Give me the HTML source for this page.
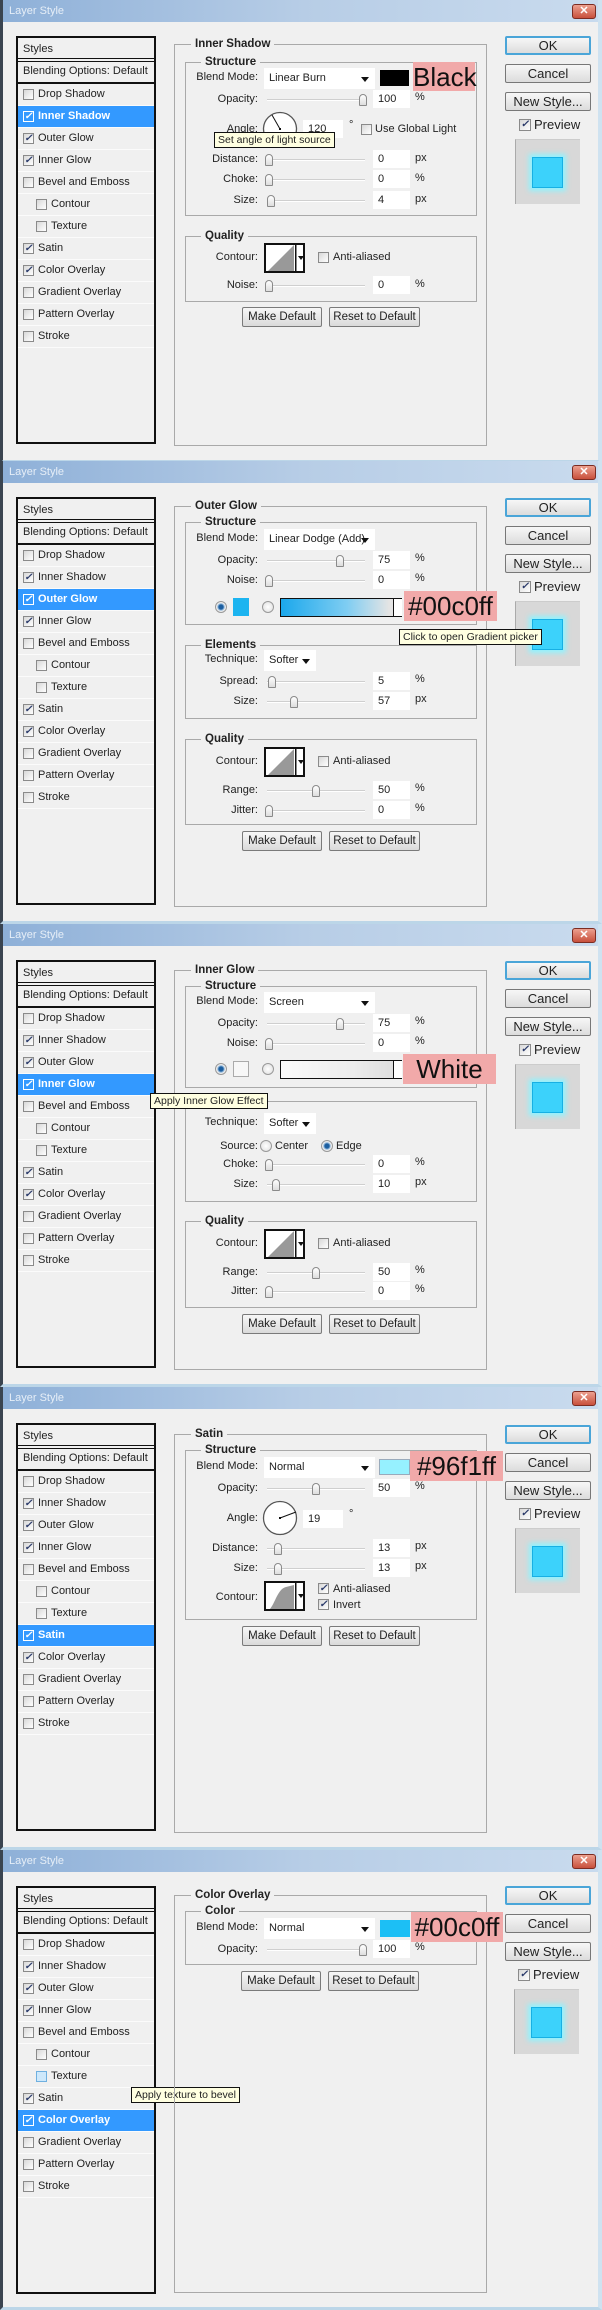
<!DOCTYPE html>
<html><head><meta charset="utf-8">
<style>
*{margin:0;padding:0;box-sizing:border-box}
body{width:602px;height:2310px;background:#c9dcec;font-family:"Liberation Sans",sans-serif;font-size:11px;color:#222;position:relative;overflow:hidden}
.p{position:absolute;left:0;width:602px;height:463px;background:#f0f0f0;border-left:3px solid #3a4450;border-right:4px solid #cfe2f0;border-bottom:3px solid #bcd6e8;overflow:hidden}
.p *{position:absolute}
.tb{left:0;top:0;width:600px;height:22px;background:linear-gradient(to right,#8eb0d8,#b7cde6 50%,#c9dbee);color:#e6eef7;line-height:22px;padding-left:6px;font-size:11px}
.x{left:569px;top:4px;width:24px;height:15px;border:1px solid #7c2c22;border-radius:3px;background:linear-gradient(#eca08f,#c8503c);color:#fff;font-size:11px;text-align:center;line-height:13px;font-weight:bold}
.lst{left:13px;top:36px;width:140px;height:408px;border:2px solid #111}
.sty{left:13px;top:36px;width:140px;height:26px;border:2px solid #111;border-bottom:4px double #111;line-height:22px;padding-left:5px}
.bo{left:13px;top:61px;width:140px;height:23px;border:2px solid #111;border-top:none;line-height:21px;padding-left:5px}
.it{left:15px;width:136px;height:22px;line-height:21px;border-bottom:1px solid #fbfbfb;padding-left:20px;white-space:nowrap}
.it.s{padding-left:33px}
.it .cb{left:5px;top:5px}
.it.s .cb{left:18px}
.cb{width:11px;height:11px;border:1px solid #8a8a8a;background:linear-gradient(135deg,#d8d8d8,#fff);font-size:10px;line-height:9px;text-align:center;color:#2a3a6a;font-weight:bold}
.sel{background:#3399ff;color:#fff;font-weight:bold}
.sel .cb{color:#fff;background:#3399ff;border-color:#fff}
.bx{border:1px solid #a9a9a9}
.lg{background:#f0f0f0;font-weight:bold;padding:0 4px;line-height:14px;font-size:11.5px}
.l{left:150px;width:105px;text-align:right;line-height:14px;white-space:nowrap}
.sl{left:264px;width:98px;height:2px;background:#cfcfcf;border-bottom:1px solid #fff}
.th{width:8px;height:12px;border:1px solid #8a8a8a;border-radius:4px 4px 1px 1px;background:linear-gradient(#fff,#ddd);margin-top:-6px}
.in{left:370px;width:37px;height:18px;background:#fff;line-height:18px;padding-left:5px}
.u{left:412px;line-height:14px}
.dd{left:261px;height:21px;background:#fff;line-height:21px;padding-left:5px;white-space:nowrap;overflow:hidden}
.dd::after{content:"";position:absolute;right:6px;top:9px;border-left:4px solid transparent;border-right:4px solid transparent;border-top:5px solid #111}
.rd{width:12px;height:12px;border-radius:50%;border:1px solid #999;background:radial-gradient(#fff,#ddd)}
.rd.on{background:radial-gradient(#1d5fa0 30%,#8fb6da 45%,#eee 60%)}
.bt{height:20px;border:1px solid #7a7a7a;border-radius:2px;background:linear-gradient(#f7f7f7,#dadada);text-align:center;line-height:18px;font-size:11.5px}
.rb{left:502px;width:86px;height:19px;border:1px solid #777;border-radius:2px;background:linear-gradient(#f7f7f7,#dcdcdc);text-align:center;line-height:17px;font-size:13px}
.ok{border:2px solid #4aa5d8;line-height:15px}
.pv{left:512px;top:139px;width:65px;height:65px;background:#d8d8d8;border-left:1px solid #aaa;border-top:1px solid #ccc}
.sq{left:529px;top:157px;width:31px;height:31px;background:#3cd2fb;border:1px solid #17b0e4;box-shadow:0 0 5px 3px #8ff3ff}
.tag{background:#f1a9a9;color:#111;font-size:26px;line-height:30px;text-align:center;font-family:"Liberation Sans",sans-serif}
.tip{background:#ffffe1;border:1px solid #111;line-height:14px;padding:0 3px;white-space:nowrap;font-size:10.5px}
.ct{background:#fff;border:2px solid #111}
</style></head><body>

<!-- PANEL 1 -->
<div class="p" style="top:0">
<div class="tb">Layer Style</div><div class="x">✕</div>
<div class="lst"></div><div class="sty">Styles</div><div class="bo">Blending Options: Default</div>
<div class="it" style="top:84px"><i class="cb"></i>Drop Shadow</div>
<div class="it sel" style="top:106px"><i class="cb">✓</i>Inner Shadow</div>
<div class="it" style="top:128px"><i class="cb">✓</i>Outer Glow</div>
<div class="it" style="top:150px"><i class="cb">✓</i>Inner Glow</div>
<div class="it" style="top:172px"><i class="cb"></i>Bevel and Emboss</div>
<div class="it s" style="top:194px"><i class="cb"></i>Contour</div>
<div class="it s" style="top:216px"><i class="cb"></i>Texture</div>
<div class="it" style="top:238px"><i class="cb">✓</i>Satin</div>
<div class="it" style="top:260px"><i class="cb">✓</i>Color Overlay</div>
<div class="it" style="top:282px"><i class="cb"></i>Gradient Overlay</div>
<div class="it" style="top:304px"><i class="cb"></i>Pattern Overlay</div>
<div class="it" style="top:326px"><i class="cb"></i>Stroke</div>

<div class="bx" style="left:171px;top:44px;width:313px;height:402px"></div>
<div class="lg" style="left:188px;top:37px">Inner Shadow</div>
<div class="bx" style="left:182px;top:62px;width:292px;height:154px"></div>
<div class="lg" style="left:198px;top:55px">Structure</div>
<div class="l" style="top:70px">Blend Mode:</div>
<div class="dd" style="top:68px;width:111px">Linear Burn</div>
<div style="left:377px;top:70px;width:29px;height:16px;background:#000"></div>
<div class="tag" style="left:410px;top:62px;width:62px;height:29px">Black</div>
<div class="l" style="top:92px">Opacity:</div><div class="sl" style="top:99px"></div><div class="th" style="left:356px;top:100px"></div><div class="in" style="top:90px">100</div><div class="u" style="top:90px">%</div>
<svg style="left:259px;top:111px" width="36" height="36"><circle cx="18" cy="18" r="16.5" fill="#fff" stroke="#555" stroke-width="1.3"/><line x1="18" y1="18" x2="10" y2="4" stroke="#111" stroke-width="1"/><rect x="17" y="17" width="2" height="2" fill="#111"/></svg>
<div class="l" style="top:122px">Angle:</div>
<div class="in" style="left:300px;top:120px;width:40px">120</div><div class="u" style="left:346px;top:118px">°</div>
<i class="cb" style="left:358px;top:124px"></i><div style="left:372px;top:122px;line-height:14px">Use Global Light</div>
<div class="tip" style="left:211px;top:132px">Set angle of light source</div>
<div class="l" style="top:152px">Distance:</div><div class="sl" style="top:159px"></div><div class="th" style="left:262px;top:160px"></div><div class="in" style="top:150px">0</div><div class="u" style="top:151px">px</div>
<div class="l" style="top:172px">Choke:</div><div class="sl" style="top:179px"></div><div class="th" style="left:262px;top:180px"></div><div class="in" style="top:170px">0</div><div class="u" style="top:171px">%</div>
<div class="l" style="top:193px">Size:</div><div class="sl" style="top:200px"></div><div class="th" style="left:264px;top:201px"></div><div class="in" style="top:191px">4</div><div class="u" style="top:192px">px</div>
<div class="bx" style="left:182px;top:236px;width:292px;height:66px"></div>
<div class="lg" style="left:198px;top:229px">Quality</div>
<div class="l" style="top:250px">Contour:</div>
<svg class="ct" style="left:261px;top:243px" width="41" height="30"><polygon points="0,28 28,0 28,28" fill="#999"/><rect x="29" y="0" width="1.5" height="28" fill="#111"/><polygon points="32,11 38,11 35,15" fill="#111"/></svg>
<i class="cb" style="left:315px;top:252px"></i><div style="left:330px;top:250px;line-height:14px">Anti-aliased</div>
<div class="l" style="top:278px">Noise:</div><div class="sl" style="top:285px"></div><div class="th" style="left:262px;top:286px"></div><div class="in" style="top:276px">0</div><div class="u" style="top:277px">%</div>
<div class="bt" style="left:239px;top:307px;width:80px">Make Default</div>
<div class="bt" style="left:326px;top:307px;width:91px">Reset to Default</div>
<div class="rb ok" style="top:36px">OK</div><div class="rb" style="top:64px">Cancel</div><div class="rb" style="top:92px">New Style...</div>
<i class="cb" style="left:516px;top:119px;width:12px;height:12px">✓</i><div style="left:531px;top:117px;font-size:13px;line-height:16px">Preview</div>
<div class="pv"></div><div class="sq"></div>
</div>

<!-- PANEL 2 -->
<div class="p" style="top:461px">
<div class="tb">Layer Style</div><div class="x">✕</div>
<div class="lst"></div><div class="sty">Styles</div><div class="bo">Blending Options: Default</div>
<div class="it" style="top:84px"><i class="cb"></i>Drop Shadow</div>
<div class="it" style="top:106px"><i class="cb">✓</i>Inner Shadow</div>
<div class="it sel" style="top:128px"><i class="cb">✓</i>Outer Glow</div>
<div class="it" style="top:150px"><i class="cb">✓</i>Inner Glow</div>
<div class="it" style="top:172px"><i class="cb"></i>Bevel and Emboss</div>
<div class="it s" style="top:194px"><i class="cb"></i>Contour</div>
<div class="it s" style="top:216px"><i class="cb"></i>Texture</div>
<div class="it" style="top:238px"><i class="cb">✓</i>Satin</div>
<div class="it" style="top:260px"><i class="cb">✓</i>Color Overlay</div>
<div class="it" style="top:282px"><i class="cb"></i>Gradient Overlay</div>
<div class="it" style="top:304px"><i class="cb"></i>Pattern Overlay</div>
<div class="it" style="top:326px"><i class="cb"></i>Stroke</div>

<div class="bx" style="left:171px;top:45px;width:313px;height:401px"></div>
<div class="lg" style="left:188px;top:38px">Outer Glow</div>
<div class="bx" style="left:182px;top:61px;width:292px;height:103px"></div>
<div class="lg" style="left:198px;top:54px">Structure</div>
<div class="l" style="top:70px">Blend Mode:</div>
<div class="dd" style="top:68px;width:111px">Linear Dodge (Add)</div>
<div class="l" style="top:92px">Opacity:</div><div class="sl" style="top:99px"></div><div class="th" style="left:333px;top:100px"></div><div class="in" style="top:90px">75</div><div class="u" style="top:90px">%</div>
<div class="l" style="top:112px">Noise:</div><div class="sl" style="top:119px"></div><div class="th" style="left:262px;top:120px"></div><div class="in" style="top:110px">0</div><div class="u" style="top:110px">%</div>
<div class="rd on" style="left:212px;top:140px"></div>
<div style="left:230px;top:137px;width:16px;height:18px;background:#1cb4f0"></div>
<div class="rd" style="left:259px;top:140px"></div>
<div style="left:277px;top:137px;width:122px;height:19px;border:1px solid #111;background:linear-gradient(to right,#1ba8ec,#7fcdf2 55%,#e4e4e4 90%)"></div>
<div style="left:390px;top:138px;width:9px;height:17px;background:#fff;border-left:1px solid #111"></div>
<div class="tag" style="left:401px;top:130px;width:93px;height:30px">#00c0ff</div>
<div class="bx" style="left:182px;top:184px;width:292px;height:74px"></div>
<div class="lg" style="left:198px;top:177px">Elements</div>
<div class="l" style="top:191px">Technique:</div>
<div class="dd" style="top:189px;width:52px">Softer</div>
<div class="l" style="top:213px">Spread:</div><div class="sl" style="top:220px"></div><div class="th" style="left:265px;top:221px"></div><div class="in" style="top:211px">5</div><div class="u" style="top:211px">%</div>
<div class="l" style="top:233px">Size:</div><div class="sl" style="top:240px"></div><div class="th" style="left:287px;top:241px"></div><div class="in" style="top:231px">57</div><div class="u" style="top:231px">px</div>
<div class="bx" style="left:182px;top:278px;width:292px;height:86px"></div>
<div class="lg" style="left:198px;top:271px">Quality</div>
<div class="l" style="top:293px">Contour:</div>
<svg class="ct" style="left:261px;top:286px" width="41" height="30"><polygon points="0,28 28,0 28,28" fill="#999"/><rect x="29" y="0" width="1.5" height="28" fill="#111"/><polygon points="32,11 38,11 35,15" fill="#111"/></svg>
<i class="cb" style="left:315px;top:295px"></i><div style="left:330px;top:293px;line-height:14px">Anti-aliased</div>
<div class="l" style="top:322px">Range:</div><div class="sl" style="top:329px"></div><div class="th" style="left:309px;top:330px"></div><div class="in" style="top:320px">50</div><div class="u" style="top:320px">%</div>
<div class="l" style="top:342px">Jitter:</div><div class="sl" style="top:349px"></div><div class="th" style="left:262px;top:350px"></div><div class="in" style="top:340px">0</div><div class="u" style="top:340px">%</div>
<div class="bt" style="left:239px;top:370px;width:80px">Make Default</div>
<div class="bt" style="left:326px;top:370px;width:91px">Reset to Default</div>
<div class="rb ok" style="top:37px">OK</div><div class="rb" style="top:65px">Cancel</div><div class="rb" style="top:93px">New Style...</div>
<i class="cb" style="left:516px;top:120px;width:12px;height:12px">✓</i><div style="left:531px;top:118px;font-size:13px;line-height:16px">Preview</div>
<div class="pv" style="top:140px"></div><div class="sq" style="top:158px"></div>
<div class="tip" style="left:396px;top:168px">Click to open Gradient picker</div>
</div>

<!-- PANEL 3 -->
<div class="p" style="top:924px">
<div class="tb">Layer Style</div><div class="x">✕</div>
<div class="lst"></div><div class="sty">Styles</div><div class="bo">Blending Options: Default</div>
<div class="it" style="top:84px"><i class="cb"></i>Drop Shadow</div>
<div class="it" style="top:106px"><i class="cb">✓</i>Inner Shadow</div>
<div class="it" style="top:128px"><i class="cb">✓</i>Outer Glow</div>
<div class="it sel" style="top:150px"><i class="cb">✓</i>Inner Glow</div>
<div class="it" style="top:172px"><i class="cb"></i>Bevel and Emboss</div>
<div class="it s" style="top:194px"><i class="cb"></i>Contour</div>
<div class="it s" style="top:216px"><i class="cb"></i>Texture</div>
<div class="it" style="top:238px"><i class="cb">✓</i>Satin</div>
<div class="it" style="top:260px"><i class="cb">✓</i>Color Overlay</div>
<div class="it" style="top:282px"><i class="cb"></i>Gradient Overlay</div>
<div class="it" style="top:304px"><i class="cb"></i>Pattern Overlay</div>
<div class="it" style="top:326px"><i class="cb"></i>Stroke</div>

<div class="bx" style="left:171px;top:46px;width:313px;height:400px"></div>
<div class="lg" style="left:188px;top:39px">Inner Glow</div>
<div class="bx" style="left:182px;top:62px;width:292px;height:102px"></div>
<div class="lg" style="left:198px;top:55px">Structure</div>
<div class="l" style="top:70px">Blend Mode:</div>
<div class="dd" style="top:68px;width:111px">Screen</div>
<div class="l" style="top:92px">Opacity:</div><div class="sl" style="top:99px"></div><div class="th" style="left:333px;top:100px"></div><div class="in" style="top:90px">75</div><div class="u" style="top:90px">%</div>
<div class="l" style="top:112px">Noise:</div><div class="sl" style="top:119px"></div><div class="th" style="left:262px;top:120px"></div><div class="in" style="top:110px">0</div><div class="u" style="top:110px">%</div>
<div class="rd on" style="left:212px;top:139px"></div>
<div style="left:230px;top:137px;width:16px;height:16px;background:#f7f7f7;border:1px solid #aaa"></div>
<div class="rd" style="left:259px;top:139px"></div>
<div style="left:277px;top:136px;width:122px;height:19px;border:1px solid #111;background:linear-gradient(to right,#fbfbfb,#ececec 60%,#dcdcdc)"></div>
<div style="left:390px;top:137px;width:9px;height:17px;background:#fff;border-left:1px solid #111"></div>
<div class="tag" style="left:400px;top:130px;width:93px;height:30px">White</div>
<div class="bx" style="left:182px;top:177px;width:292px;height:101px"></div>
<div class="lg" style="left:198px;top:170px">Elements</div>
<div class="tip" style="left:147px;top:169px">Apply Inner Glow Effect</div>
<div class="l" style="top:191px">Technique:</div>
<div class="dd" style="top:189px;width:52px">Softer</div>
<div class="l" style="top:215px">Source:</div>
<div class="rd" style="left:257px;top:216px"></div><div style="left:272px;top:215px;line-height:14px">Center</div>
<div class="rd on" style="left:318px;top:216px"></div><div style="left:333px;top:215px;line-height:14px">Edge</div>
<div class="l" style="top:233px">Choke:</div><div class="sl" style="top:240px"></div><div class="th" style="left:262px;top:241px"></div><div class="in" style="top:231px">0</div><div class="u" style="top:231px">%</div>
<div class="l" style="top:253px">Size:</div><div class="sl" style="top:260px"></div><div class="th" style="left:269px;top:261px"></div><div class="in" style="top:251px">10</div><div class="u" style="top:251px">px</div>
<div class="bx" style="left:182px;top:297px;width:292px;height:87px"></div>
<div class="lg" style="left:198px;top:290px">Quality</div>
<div class="l" style="top:312px">Contour:</div>
<svg class="ct" style="left:261px;top:305px" width="41" height="30"><polygon points="0,28 28,0 28,28" fill="#999"/><rect x="29" y="0" width="1.5" height="28" fill="#111"/><polygon points="32,11 38,11 35,15" fill="#111"/></svg>
<i class="cb" style="left:315px;top:314px"></i><div style="left:330px;top:312px;line-height:14px">Anti-aliased</div>
<div class="l" style="top:341px">Range:</div><div class="sl" style="top:348px"></div><div class="th" style="left:309px;top:349px"></div><div class="in" style="top:339px">50</div><div class="u" style="top:339px">%</div>
<div class="l" style="top:360px">Jitter:</div><div class="sl" style="top:367px"></div><div class="th" style="left:262px;top:368px"></div><div class="in" style="top:358px">0</div><div class="u" style="top:358px">%</div>
<div class="bt" style="left:239px;top:390px;width:80px">Make Default</div>
<div class="bt" style="left:326px;top:390px;width:91px">Reset to Default</div>
<div class="rb ok" style="top:37px">OK</div><div class="rb" style="top:65px">Cancel</div><div class="rb" style="top:93px">New Style...</div>
<i class="cb" style="left:516px;top:120px;width:12px;height:12px">✓</i><div style="left:531px;top:118px;font-size:13px;line-height:16px">Preview</div>
<div class="pv" style="top:140px"></div><div class="sq" style="top:158px"></div>
</div>

<!-- PANEL 4 -->
<div class="p" style="top:1387px">
<div class="tb">Layer Style</div><div class="x">✕</div>
<div class="lst"></div><div class="sty">Styles</div><div class="bo">Blending Options: Default</div>
<div class="it" style="top:84px"><i class="cb"></i>Drop Shadow</div>
<div class="it" style="top:106px"><i class="cb">✓</i>Inner Shadow</div>
<div class="it" style="top:128px"><i class="cb">✓</i>Outer Glow</div>
<div class="it" style="top:150px"><i class="cb">✓</i>Inner Glow</div>
<div class="it" style="top:172px"><i class="cb"></i>Bevel and Emboss</div>
<div class="it s" style="top:194px"><i class="cb"></i>Contour</div>
<div class="it s" style="top:216px"><i class="cb"></i>Texture</div>
<div class="it sel" style="top:238px"><i class="cb">✓</i>Satin</div>
<div class="it" style="top:260px"><i class="cb">✓</i>Color Overlay</div>
<div class="it" style="top:282px"><i class="cb"></i>Gradient Overlay</div>
<div class="it" style="top:304px"><i class="cb"></i>Pattern Overlay</div>
<div class="it" style="top:326px"><i class="cb"></i>Stroke</div>

<div class="bx" style="left:171px;top:47px;width:313px;height:399px"></div>
<div class="lg" style="left:188px;top:40px">Satin</div>
<div class="bx" style="left:182px;top:63px;width:292px;height:170px"></div>
<div class="lg" style="left:198px;top:56px">Structure</div>
<div class="l" style="top:72px">Blend Mode:</div>
<div class="dd" style="top:70px;width:111px">Normal</div>
<div style="left:376px;top:72px;width:31px;height:16px;background:#96f1ff;border:1px solid #9ab"></div>
<div class="tag" style="left:407px;top:64px;width:93px;height:30px">#96f1ff</div>
<div class="l" style="top:94px">Opacity:</div><div class="sl" style="top:101px"></div><div class="th" style="left:309px;top:102px"></div><div class="in" style="top:92px">50</div><div class="u" style="top:92px">%</div>
<svg style="left:259px;top:113px" width="36" height="36"><circle cx="18" cy="18" r="16.5" fill="#fff" stroke="#555" stroke-width="1.3"/><line x1="18" y1="18" x2="34" y2="12" stroke="#111" stroke-width="1"/><rect x="17" y="17" width="2" height="2" fill="#111"/></svg>
<div class="l" style="top:124px">Angle:</div>
<div class="in" style="left:300px;top:123px;width:40px">19</div><div class="u" style="left:346px;top:120px">°</div>
<div class="l" style="top:154px">Distance:</div><div class="sl" style="top:161px"></div><div class="th" style="left:271px;top:162px"></div><div class="in" style="top:152px">13</div><div class="u" style="top:152px">px</div>
<div class="l" style="top:174px">Size:</div><div class="sl" style="top:181px"></div><div class="th" style="left:271px;top:182px"></div><div class="in" style="top:172px">13</div><div class="u" style="top:172px">px</div>
<div class="l" style="top:203px">Contour:</div>
<svg class="ct" style="left:261px;top:194px" width="41" height="30"><path d="M0,28 C8,28 10,6 20,4 L28,2 L28,28 Z" fill="#999"/><rect x="29" y="0" width="1.5" height="28" fill="#111"/><polygon points="32,11 38,11 35,15" fill="#111"/></svg>
<i class="cb" style="left:315px;top:196px">✓</i><div style="left:330px;top:195px;line-height:14px">Anti-aliased</div>
<i class="cb" style="left:315px;top:212px">✓</i><div style="left:330px;top:211px;line-height:14px">Invert</div>
<div class="bt" style="left:239px;top:239px;width:80px">Make Default</div>
<div class="bt" style="left:326px;top:239px;width:91px">Reset to Default</div>
<div class="rb ok" style="top:38px">OK</div><div class="rb" style="top:66px">Cancel</div><div class="rb" style="top:94px">New Style...</div>
<i class="cb" style="left:516px;top:121px;width:12px;height:12px">✓</i><div style="left:531px;top:119px;font-size:13px;line-height:16px">Preview</div>
<div class="pv" style="top:141px"></div><div class="sq" style="top:159px"></div>
</div>

<!-- PANEL 5 -->
<div class="p" style="top:1850px;height:460px">
<div class="tb">Layer Style</div><div class="x">✕</div>
<div class="lst"></div><div class="sty">Styles</div><div class="bo">Blending Options: Default</div>
<div class="it" style="top:84px"><i class="cb"></i>Drop Shadow</div>
<div class="it" style="top:106px"><i class="cb">✓</i>Inner Shadow</div>
<div class="it" style="top:128px"><i class="cb">✓</i>Outer Glow</div>
<div class="it" style="top:150px"><i class="cb">✓</i>Inner Glow</div>
<div class="it" style="top:172px"><i class="cb"></i>Bevel and Emboss</div>
<div class="it s" style="top:194px"><i class="cb"></i>Contour</div>
<div class="it s" style="top:216px"><i class="cb" style="background:#cde8fb;border-color:#6fb0e0"></i>Texture</div>
<div class="it" style="top:238px"><i class="cb">✓</i>Satin</div>
<div class="it sel" style="top:260px"><i class="cb">✓</i>Color Overlay</div>
<div class="it" style="top:282px"><i class="cb"></i>Gradient Overlay</div>
<div class="it" style="top:304px"><i class="cb"></i>Pattern Overlay</div>
<div class="it" style="top:326px"><i class="cb"></i>Stroke</div>
<div class="tip" style="left:128px;top:237px">Apply texture to bevel</div>

<div class="bx" style="left:171px;top:45px;width:313px;height:398px"></div>
<div class="lg" style="left:188px;top:38px">Color Overlay</div>
<div class="bx" style="left:182px;top:61px;width:292px;height:54px"></div>
<div class="lg" style="left:198px;top:54px">Color</div>
<div class="l" style="top:70px">Blend Mode:</div>
<div class="dd" style="top:68px;width:111px">Normal</div>
<div style="left:377px;top:70px;width:30px;height:17px;background:#1cbff5"></div>
<div class="tag" style="left:408px;top:62px;width:92px;height:30px">#00c0ff</div>
<div class="l" style="top:92px">Opacity:</div><div class="sl" style="top:99px"></div><div class="th" style="left:356px;top:100px"></div><div class="in" style="top:90px">100</div><div class="u" style="top:90px">%</div>
<div class="bt" style="left:238px;top:121px;width:80px">Make Default</div>
<div class="bt" style="left:325px;top:121px;width:91px">Reset to Default</div>
<div class="rb ok" style="top:36px">OK</div><div class="rb" style="top:64px">Cancel</div><div class="rb" style="top:92px">New Style...</div>
<i class="cb" style="left:515px;top:119px;width:12px;height:12px">✓</i><div style="left:530px;top:117px;font-size:13px;line-height:16px">Preview</div>
<div class="pv" style="left:511px;top:139px"></div><div class="sq" style="left:528px;top:157px"></div>
</div>
</body></html>
